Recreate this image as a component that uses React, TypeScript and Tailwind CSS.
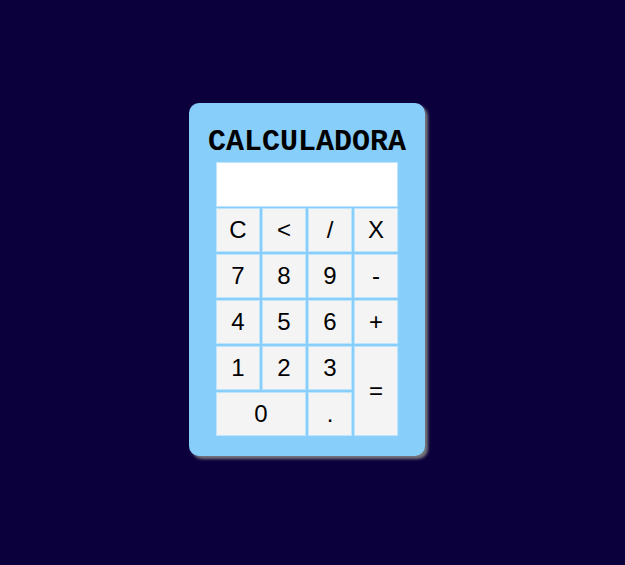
import React from "react";

const cell =
  "flex items-center justify-center bg-[#f4f4f4] border border-[#bfe4fb] text-[24px] text-black";

export default function App() {
  return (
    <div className="w-full h-[565px] bg-[#0c003c] flex items-center justify-center pr-[11px] pb-[6px]">
      <div
        className="w-[236px] h-[353px] bg-[#87cefa] rounded-[10px] px-[27px] pt-[20px] flex flex-col items-center shadow-[3px_3px_3px_rgba(130,130,130,0.9)]"
        style={{ fontFamily: "'Liberation Sans', Arial, sans-serif" }}
      >
        <div
          className="text-[30px] font-bold leading-[38px] text-black"
          style={{ fontFamily: "'Liberation Mono', 'Courier New', monospace" }}
        >
          CALCULADORA
        </div>
        <div className="mt-[1px] w-[182px] h-[45px] bg-white border border-[#bfe4fb]" />
        <div className="mt-[1px] w-[182px] grid grid-cols-4 grid-rows-[repeat(5,44px)] gap-[2px]">
          <div className={cell}>C</div>
          <div className={cell}>&lt;</div>
          <div className={cell}>/</div>
          <div className={cell}>X</div>
          <div className={cell}>7</div>
          <div className={cell}>8</div>
          <div className={cell}>9</div>
          <div className={cell}>-</div>
          <div className={cell}>4</div>
          <div className={cell}>5</div>
          <div className={cell}>6</div>
          <div className={cell}>+</div>
          <div className={cell}>1</div>
          <div className={cell}>2</div>
          <div className={cell}>3</div>
          <div className={`${cell} row-span-2`}>=</div>
          <div className={`${cell} col-span-2`}>0</div>
          <div className={cell}>.</div>
        </div>
      </div>
    </div>
  );
}
